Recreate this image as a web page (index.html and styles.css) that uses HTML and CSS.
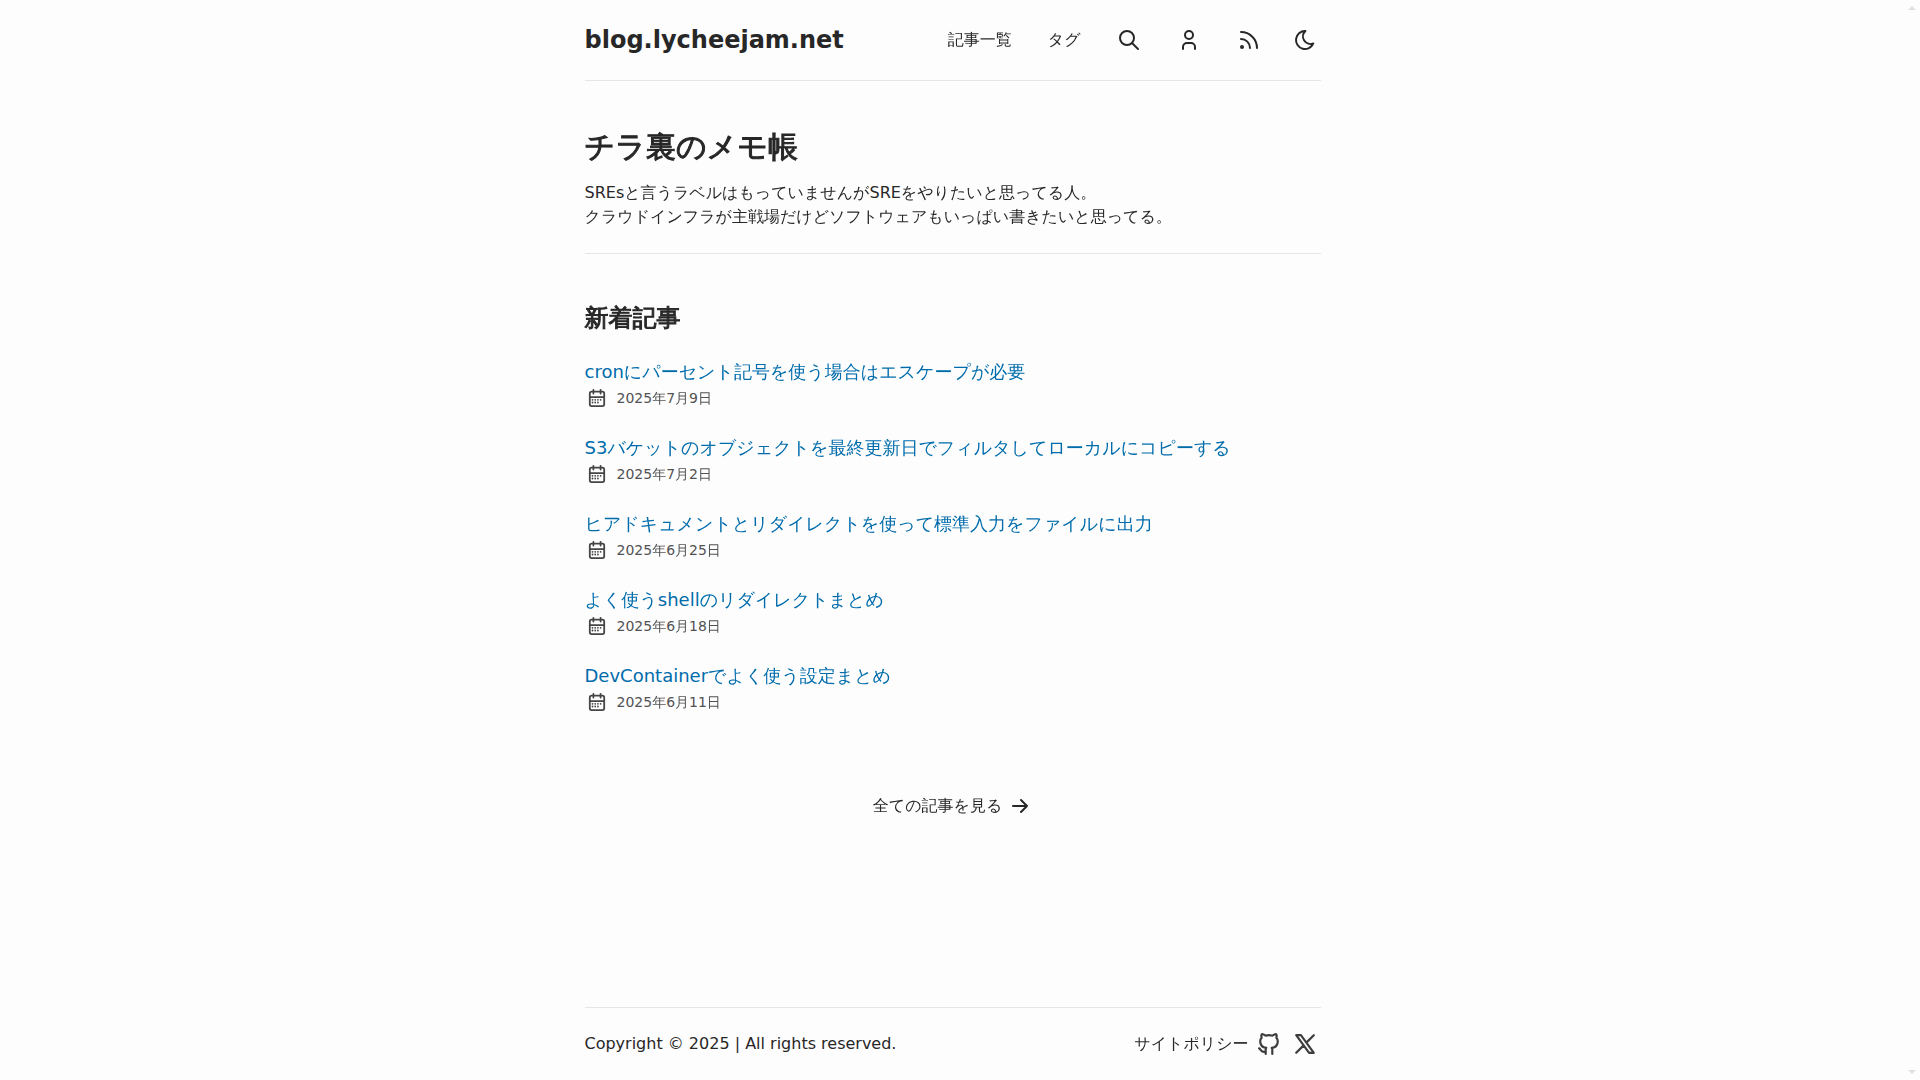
FILE: index.html
```html
<!DOCTYPE html>
<html lang="ja">
<head>
    <meta charset="UTF-8">
    <meta name="viewport" content="width=device-width, initial-scale=1.0">
    <title>blog.lycheejam.net</title>
    <link rel="stylesheet" href="styles.css">
</head>
<body>
    <header class="site-header container">
        <div class="header-inner">
            <a class="logo" href="/">blog.lycheejam.net</a>
            <nav class="site-nav">
                <ul class="nav-list">
                    <li><a href="/posts">記事一覧</a></li>
                    <li><a href="/tags">タグ</a></li>
                    <li>
                        <a href="/search" aria-label="検索">
                            <svg class="icon" viewBox="0 0 24 24"><circle cx="10" cy="10" r="7"/><path d="M21 21l-6-6"/></svg>
                        </a>
                    </li>
                    <li>
                        <a href="/about" aria-label="プロフィール">
                            <svg class="icon" viewBox="0 0 24 24"><circle cx="12" cy="7" r="4"/><path d="M6 21v-2a4 4 0 0 1 4-4h4a4 4 0 0 1 4 4v2"/></svg>
                        </a>
                    </li>
                    <li>
                        <a href="/rss.xml" aria-label="RSS">
                            <svg class="icon" viewBox="0 0 24 24"><circle cx="5" cy="19" r="1"/><path d="M4 4a16 16 0 0 1 16 16M4 11a9 9 0 0 1 9 9"/></svg>
                        </a>
                    </li>
                </ul>
                <button class="theme-btn" type="button" aria-label="テーマ切り替え">
                    <svg class="icon" viewBox="0 0 24 24"><path d="M12 3c.132 0 .263 0 .393 0a7.5 7.5 0 0 0 7.92 12.446a9 9 0 1 1-8.313-12.454z"/></svg>
                </button>
            </nav>
        </div>
    </header>

    <main class="container">
        <section class="hero">
            <h1>チラ裏のメモ帳</h1>
            <p>SREsと言うラベルはもっていませんがSREをやりたいと思ってる人。<br>クラウドインフラが主戦場だけどソフトウェアもいっぱい書きたいと思ってる。</p>
        </section>

        <section class="recent">
            <h2>新着記事</h2>
            <ul class="post-list">
                <li>
                    <a href="#">cronにパーセント記号を使う場合はエスケープが必要</a>
                    <div class="date">
                        <svg class="icon" viewBox="0 0 24 24"><use href="#calendar"/></svg>
                        <time datetime="2025-07-09">2025年7月9日</time>
                    </div>
                </li>
                <li>
                    <a href="#">S3バケットのオブジェクトを最終更新日でフィルタしてローカルにコピーする</a>
                    <div class="date">
                        <svg class="icon" viewBox="0 0 24 24"><use href="#calendar"/></svg>
                        <time datetime="2025-07-02">2025年7月2日</time>
                    </div>
                </li>
                <li>
                    <a href="#">ヒアドキュメントとリダイレクトを使って標準入力をファイルに出力</a>
                    <div class="date">
                        <svg class="icon" viewBox="0 0 24 24"><use href="#calendar"/></svg>
                        <time datetime="2025-06-25">2025年6月25日</time>
                    </div>
                </li>
                <li>
                    <a href="#">よく使うshellのリダイレクトまとめ</a>
                    <div class="date">
                        <svg class="icon" viewBox="0 0 24 24"><use href="#calendar"/></svg>
                        <time datetime="2025-06-18">2025年6月18日</time>
                    </div>
                </li>
                <li>
                    <a href="#">DevContainerでよく使う設定まとめ</a>
                    <div class="date">
                        <svg class="icon" viewBox="0 0 24 24"><use href="#calendar"/></svg>
                        <time datetime="2025-06-11">2025年6月11日</time>
                    </div>
                </li>
            </ul>
        </section>

        <a class="all-posts" href="/posts">
            全ての記事を見る
            <svg class="icon" viewBox="0 0 24 24"><path d="M5 12h14M13 18l6-6M13 6l6 6"/></svg>
        </a>
    </main>

    <footer class="site-footer container">
        <div class="footer-inner">
            <span>Copyright © 2025 | All rights reserved.</span>
            <div class="footer-links">
                <a href="/policy">サイトポリシー</a>
                <a class="social" href="#" aria-label="GitHub">
                    <svg class="icon" viewBox="0 0 24 24"><path d="M9 19c-4.3 1.4-4.3-2.5-6-3m12 5v-3.5c0-1 .1-1.4-.5-2 2.8-.3 5.5-1.4 5.5-6a4.6 4.6 0 0 0-1.3-3.2 4.2 4.2 0 0 0-.1-3.2s-1.1-.3-3.5 1.3a12.3 12.3 0 0 0-6.2 0c-2.4-1.6-3.5-1.3-3.5-1.3a4.2 4.2 0 0 0-.1 3.2 4.6 4.6 0 0 0-1.3 3.2c0 4.6 2.7 5.7 5.5 6-.6.6-.6 1.2-.5 2v3.5"/></svg>
                </a>
                <a class="social" href="#" aria-label="X">
                    <svg class="icon" viewBox="0 0 24 24"><path d="M4 4l11.733 16h4.267l-11.733-16zM4 20l6.768-6.768M13.228 10.772l6.772-6.772"/></svg>
                </a>
            </div>
        </div>
    </footer>

    <svg class="sprite" width="0" height="0" aria-hidden="true">
        <symbol id="calendar" viewBox="0 0 24 24">
            <path d="M4 7a2 2 0 0 1 2-2h12a2 2 0 0 1 2 2v12a2 2 0 0 1-2 2H6a2 2 0 0 1-2-2zM16 3v4M8 3v4M4 11h16M7 14h.013M10.01 14h.005M13.01 14h.005M16.015 14h.005M13.015 17h.005M7.01 17h.005M10.01 17h.005"/>
        </symbol>
    </svg>
</body>
</html>
```
FILE: styles.css
```css
* {
    margin: 0;
    padding: 0;
    box-sizing: border-box;
}

body {
    display: flex;
    flex-direction: column;
    min-height: 100vh;
    padding-right: 15px;
    background: #fdfdfd;
    color: #282728;
    font-family: "DejaVu Sans", "WenQuanYi Zen Hei", "Noto Sans CJK JP", sans-serif;
    font-size: 16px;
    line-height: 24px;
}

/* scroll arrows in the right gutter */
body::before,
body::after {
    content: "";
    position: fixed;
    right: 4px;
    border: 4px solid transparent;
}

body::before {
    top: 6px;
    border-top: none;
    border-bottom-color: #e0e0e0;
}

body::after {
    bottom: 6px;
    border-bottom: none;
    border-top-color: #e0e0e0;
}

a {
    color: inherit;
    text-decoration: none;
}

ul {
    list-style: none;
}

.container {
    width: 100%;
    max-width: 768px;
    margin: 0 auto;
    padding: 0 16px;
}

.icon {
    display: block;
    flex-shrink: 0;
    width: 24px;
    height: 24px;
    fill: none;
    stroke: currentColor;
    stroke-width: 2;
    stroke-linecap: round;
    stroke-linejoin: round;
}

.sprite {
    display: none;
}

/* Header */
.header-inner {
    display: flex;
    align-items: center;
    justify-content: space-between;
    padding: 24px 0;
    border-bottom: 1px solid #e6e6e6;
}

.logo {
    font-size: 24px;
    line-height: 32px;
    font-weight: bold;
}

.site-nav {
    display: flex;
    align-items: center;
    gap: 24px;
}

.nav-list {
    display: flex;
    align-items: center;
    gap: 28px;
}

.nav-list a,
.theme-btn {
    display: block;
    padding: 4px;
}

.theme-btn {
    border: none;
    background: none;
    color: inherit;
    cursor: pointer;
}

/* the Japanese face has no bold, so thicken the headings */
h1,
h2 {
    -webkit-text-stroke: 1px currentColor;
}

/* Hero */
.hero {
    padding: 48px 0 24px;
    border-bottom: 1px solid #e6e6e6;
}

h1 {
    margin-bottom: 16px;
    font-size: 30px;
    line-height: 36px;
}

/* Posts */
.recent {
    padding: 48px 0 24px;
}

h2 {
    font-size: 24px;
    line-height: 32px;
}

.post-list li {
    margin: 24px 0;
}

.post-list a {
    display: block;
    color: #006cac;
    font-size: 18px;
    line-height: 28px;
}

.date {
    display: flex;
    align-items: center;
    gap: 8px;
    color: #535253;
    font-size: 14px;
}

.date .icon {
    transform: scale(0.9);
    color: #464546;
}

.all-posts {
    display: flex;
    align-items: center;
    justify-content: center;
    gap: 6px;
    margin: 32px 0;
}

/* Footer */
.site-footer {
    margin-top: auto;
}

.footer-inner {
    display: flex;
    align-items: center;
    justify-content: space-between;
    padding: 20px 0;
    border-top: 1px solid #e6e6e6;
}

.footer-links {
    display: flex;
    align-items: center;
    gap: 4px;
}

.social {
    padding: 4px;
}

.social .icon {
    transform: scale(1.1);
    color: #3f3e3f;
}
```
